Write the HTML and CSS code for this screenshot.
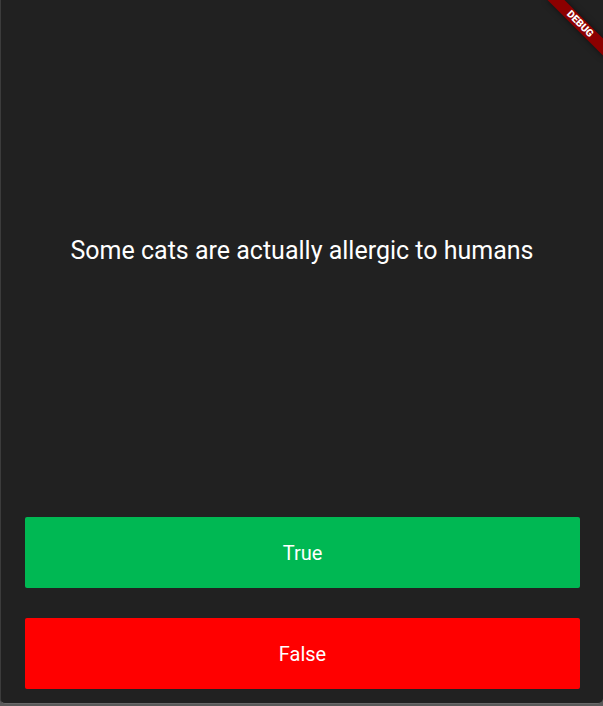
FILE: index.html
```html
<!DOCTYPE html>
<html>
<head>
<meta charset="utf-8">
<link rel="stylesheet" href="styles.css">
</head>
<body>
<div class="window">
  <div class="question-area">
    <p class="question">Some cats are actually allergic to humans</p>
  </div>
  <div class="answers">
    <button class="answer answer-true">True</button>
    <button class="answer answer-false">False</button>
  </div>
  <div class="debug-banner">DEBUG</div>
</div>
</body>
</html>
```
FILE: styles.css
```css
html, body {
  margin: 0;
  padding: 0;
  width: 603px;
  height: 706px;
  overflow: hidden;
  background: #5a5a5a;
  font-family: Roboto, "Liberation Sans", sans-serif;
}
.window {
  position: relative;
  box-sizing: border-box;
  width: 603px;
  height: 704px;
  background: #212121;
  border-left: 1px solid #3c3c3c;
  border-bottom: 1px solid #6a6a6a;
  border-radius: 0 0 5px 5px;
  display: flex;
  flex-direction: column;
  overflow: hidden;
}
.question-area {
  height: 500px;
  display: flex;
  align-items: center;
  justify-content: center;
  padding: 0 10px;
}
.question {
  margin: 0;
  color: #ffffff;
  font-size: 25px;
  text-align: center;
}
.answers {
  display: flex;
  flex-direction: column;
  gap: 30px;
  padding: 17px 23px 0 24px;
}
.answer {
  height: 71px;
  border: none;
  border-radius: 2px;
  color: #ffffff;
  font-family: Roboto, "Liberation Sans", sans-serif;
  font-size: 20px;
  padding: 0;
}
.answer-true {
  background: #00b853;
}
.answer-false {
  background: #ff0000;
}
.debug-banner {
  position: absolute;
  left: 539px;
  top: 18px;
  width: 80px;
  height: 12px;
  line-height: 12px;
  transform: rotate(45deg);
  background: #8c0000;
  box-shadow: 0 0 6px rgba(0, 0, 0, 0.5);
  color: #ffffff;
  font-size: 10.2px;
  font-weight: 900;
  text-align: center;
}
```
